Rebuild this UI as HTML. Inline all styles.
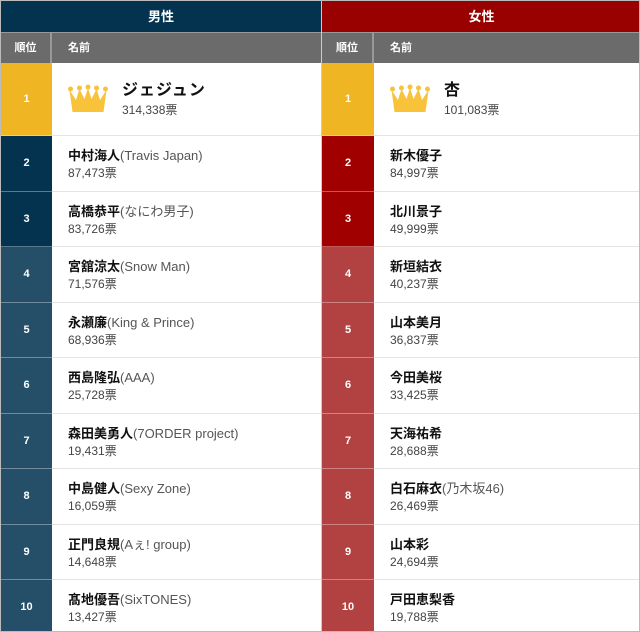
<!DOCTYPE html>
<html><head><meta charset="utf-8"><style>
*{margin:0;padding:0;box-sizing:border-box}
html,body{width:640px;height:632px;overflow:hidden;background:#fff;font-family:"Liberation Sans","Noto Sans CJK JP",sans-serif}
.wrap{position:absolute;left:0;top:0;width:640px;height:632px;border:1px solid #bbb;overflow:hidden}
.panel{position:absolute;top:0;width:320px}
.h1{height:31px;color:#fff;font-weight:bold;font-size:13px;text-align:center;line-height:31px}
.h2{height:31px;background:#6b6b6b;color:#fff;font-weight:bold;font-size:11px;display:flex;border-top:1px solid #999}
.h2 .r{border-right:2px solid #999;text-align:center;line-height:30px}
.h2 .n{padding-left:16px;line-height:30px}
.row{display:flex;height:55.5px;border-bottom:1px solid #e4e4e4}
.row .r{color:#fff;font-weight:bold;font-size:11px;display:flex;align-items:center;justify-content:center;border-bottom:1px solid rgba(255,255,255,.35);margin-bottom:-1px}
.row .n{padding-left:16px;padding-top:11px}
.nm{font-size:13px;font-weight:bold;color:#111;line-height:18px}
.nm span{font-weight:normal;color:#555}
.v{font-size:12px;color:#444;line-height:16px}
.top{height:73px}
.top .n{display:flex;align-items:center;padding-top:0}
.top .nm{font-size:16px;letter-spacing:1px;line-height:22px}
</style></head><body><div class="wrap">
<div class="panel" style="left:0">
<div class="h1" style="background:#03334f">男性</div>
<div class="h2"><div class="r" style="width:51px">順位</div><div class="n">名前</div></div>
<div class="row top"><div class="r" style="width:51px;background:#efb522">1</div><div class="n"><svg width="40" height="30" viewBox="0 0 40 30" style="margin-right:14px"><g fill="#f8c33a"><circle cx="2.5" cy="5" r="2.5"/><circle cx="11.5" cy="4" r="2.5"/><circle cx="20" cy="3" r="2.5"/><circle cx="28.5" cy="4" r="2.5"/><circle cx="37.5" cy="5" r="2.5"/><path d="M1.5 6 L8 16 L11.5 5 L16.5 15 L20 4 L23.5 15 L28.5 5 L32 16 L38.5 6 L35.5 28 L4.5 28 Z"/></g></svg><div><div class="nm">ジェジュン</div><div class="v">314,338票</div></div></div></div>
<div class="row"><div class="r" style="width:51px;background:#03334f">2</div><div class="n"><div class="nm">中村海人<span>(Travis Japan)</span></div><div class="v">87,473票</div></div></div>
<div class="row"><div class="r" style="width:51px;background:#03334f">3</div><div class="n"><div class="nm">高橋恭平<span>(なにわ男子)</span></div><div class="v">83,726票</div></div></div>
<div class="row"><div class="r" style="width:51px;background:#254f69">4</div><div class="n"><div class="nm">宮舘涼太<span>(Snow Man)</span></div><div class="v">71,576票</div></div></div>
<div class="row"><div class="r" style="width:51px;background:#254f69">5</div><div class="n"><div class="nm">永瀬廉<span>(King &amp; Prince)</span></div><div class="v">68,936票</div></div></div>
<div class="row"><div class="r" style="width:51px;background:#254f69">6</div><div class="n"><div class="nm">西島隆弘<span>(AAA)</span></div><div class="v">25,728票</div></div></div>
<div class="row"><div class="r" style="width:51px;background:#254f69">7</div><div class="n"><div class="nm">森田美勇人<span>(7ORDER project)</span></div><div class="v">19,431票</div></div></div>
<div class="row"><div class="r" style="width:51px;background:#254f69">8</div><div class="n"><div class="nm">中島健人<span>(Sexy Zone)</span></div><div class="v">16,059票</div></div></div>
<div class="row"><div class="r" style="width:51px;background:#254f69">9</div><div class="n"><div class="nm">正門良規<span>(Aぇ! group)</span></div><div class="v">14,648票</div></div></div>
<div class="row"><div class="r" style="width:51px;background:#254f69">10</div><div class="n"><div class="nm">髙地優吾<span>(SixTONES)</span></div><div class="v">13,427票</div></div></div>
</div>
<div class="panel" style="left:320px;width:320px;border-left:1px solid #ccc">
<div class="h1" style="background:#990000">女性</div>
<div class="h2"><div class="r" style="width:52px">順位</div><div class="n">名前</div></div>
<div class="row top"><div class="r" style="width:52px;background:#efb522">1</div><div class="n"><svg width="40" height="30" viewBox="0 0 40 30" style="margin-right:14px"><g fill="#f8c33a"><circle cx="2.5" cy="5" r="2.5"/><circle cx="11.5" cy="4" r="2.5"/><circle cx="20" cy="3" r="2.5"/><circle cx="28.5" cy="4" r="2.5"/><circle cx="37.5" cy="5" r="2.5"/><path d="M1.5 6 L8 16 L11.5 5 L16.5 15 L20 4 L23.5 15 L28.5 5 L32 16 L38.5 6 L35.5 28 L4.5 28 Z"/></g></svg><div><div class="nm">杏</div><div class="v">101,083票</div></div></div></div>
<div class="row"><div class="r" style="width:52px;background:#a00000">2</div><div class="n"><div class="nm">新木優子</div><div class="v">84,997票</div></div></div>
<div class="row"><div class="r" style="width:52px;background:#a00000">3</div><div class="n"><div class="nm">北川景子</div><div class="v">49,999票</div></div></div>
<div class="row"><div class="r" style="width:52px;background:#b24242">4</div><div class="n"><div class="nm">新垣結衣</div><div class="v">40,237票</div></div></div>
<div class="row"><div class="r" style="width:52px;background:#b24242">5</div><div class="n"><div class="nm">山本美月</div><div class="v">36,837票</div></div></div>
<div class="row"><div class="r" style="width:52px;background:#b24242">6</div><div class="n"><div class="nm">今田美桜</div><div class="v">33,425票</div></div></div>
<div class="row"><div class="r" style="width:52px;background:#b24242">7</div><div class="n"><div class="nm">天海祐希</div><div class="v">28,688票</div></div></div>
<div class="row"><div class="r" style="width:52px;background:#b24242">8</div><div class="n"><div class="nm">白石麻衣<span>(乃木坂46)</span></div><div class="v">26,469票</div></div></div>
<div class="row"><div class="r" style="width:52px;background:#b24242">9</div><div class="n"><div class="nm">山本彩</div><div class="v">24,694票</div></div></div>
<div class="row"><div class="r" style="width:52px;background:#b24242">10</div><div class="n"><div class="nm">戸田恵梨香</div><div class="v">19,788票</div></div></div>
</div>
</div></body></html>
